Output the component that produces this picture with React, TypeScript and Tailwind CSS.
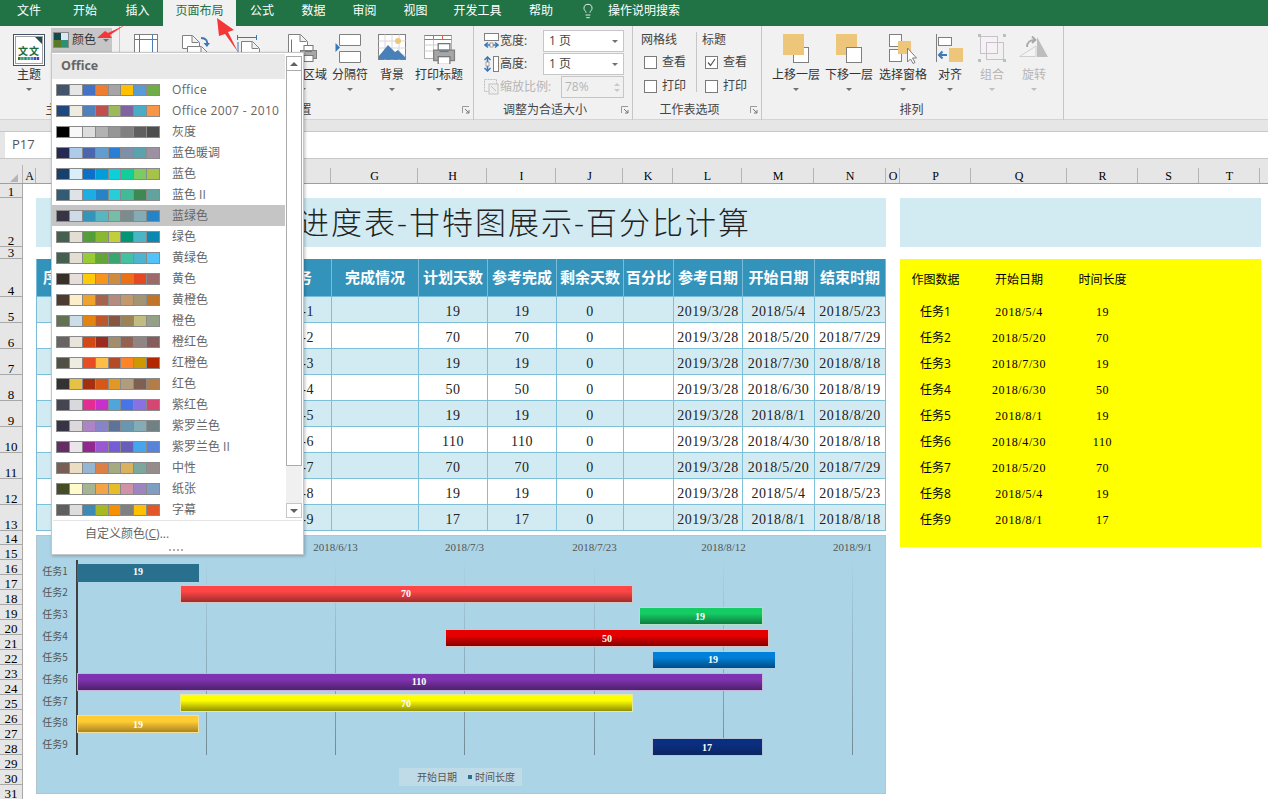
import React from 'react';
import { Lightbulb } from 'lucide-react';

const serif = "font-['Liberation_Serif','Noto_Sans_CJK_SC',serif]";

const tabs = [
  { label: '文件', w: 'w-[58px]' },
  { label: '开始', w: 'w-[54px]' },
  { label: '插入', w: 'w-[51px]' },
  { label: '页面布局', w: 'w-[73px]', active: true },
  { label: '公式', w: 'w-[52px]' },
  { label: '数据', w: 'w-[51px]' },
  { label: '审阅', w: 'w-[51px]' },
  { label: '视图', w: 'w-[51px]' },
  { label: '开发工具', w: 'w-[73px]' },
  { label: '帮助', w: 'w-[54px]' },
];

const palettes: [string, string[]][] = [
  ['Office', ['#44546a', '#e7e6e6', '#4472c4', '#ed7d31', '#a5a5a5', '#ffc000', '#5b9bd5', '#70ad47']],
  ['Office 2007 - 2010', ['#1f497d', '#eeece1', '#4f81bd', '#c0504d', '#9bbb59', '#8064a2', '#4bacc6', '#f79646']],
  ['灰度', ['#000000', '#f8f8f8', '#dddddd', '#b2b2b2', '#969696', '#808080', '#5f5f5f', '#4d4d4d']],
  ['蓝色暖调', ['#242852', '#acccea', '#4a66ac', '#629dd1', '#297fd5', '#7f8fa9', '#5aa2ae', '#9d90a0']],
  ['蓝色', ['#17406d', '#dbeff9', '#0f6fc6', '#009dd9', '#0bd0d9', '#10cf9b', '#7cca62', '#a5c249']],
  ['蓝色 II', ['#335b74', '#dfe3e5', '#1cade4', '#2683c6', '#27ced7', '#42ba97', '#3e8853', '#62a39f']],
  ['蓝绿色', ['#373545', '#cedbe6', '#3494ba', '#58b6c0', '#75bda7', '#7a8c8e', '#84acb6', '#2683c6']],
  ['绿色', ['#455f51', '#e3ded1', '#549e39', '#8ab833', '#c0cf3a', '#029676', '#4ab5c4', '#0989b1']],
  ['黄绿色', ['#455f51', '#e3ded1', '#99cb38', '#63a537', '#37a76f', '#44c1a3', '#4eb3cf', '#51c3f9']],
  ['黄色', ['#39302a', '#e5dedb', '#ffca08', '#f8931d', '#ce8d3e', '#ec7016', '#e64823', '#9c6a6a']],
  ['黄橙色', ['#4e3b30', '#fbeec9', '#f0a22e', '#a5644e', '#b58b80', '#c3986d', '#a19574', '#c17529']],
  ['橙色', ['#637052', '#ccddea', '#e48312', '#bd582c', '#865640', '#9b8357', '#c2bc80', '#94a088']],
  ['橙红色', ['#696464', '#e9e5dc', '#d34817', '#9b2d1f', '#a28e6a', '#956251', '#918485', '#855d5d']],
  ['红橙色', ['#505046', '#eeece0', '#e84c22', '#ffbd47', '#b64926', '#ff8427', '#cc9900', '#b22600']],
  ['红色', ['#323232', '#e5c243', '#a5300f', '#d55816', '#e19825', '#b19c7d', '#7f5f52', '#b27d49']],
  ['紫红色', ['#454551', '#d8d9dc', '#e32d91', '#c830cc', '#4ea6dc', '#4775e7', '#8971e1', '#d54773']],
  ['紫罗兰色', ['#373545', '#dcd8dc', '#ad84c6', '#8784c7', '#5d739a', '#6997af', '#84acb6', '#6f8183']],
  ['紫罗兰色 II', ['#632e62', '#eae5eb', '#92278f', '#9b57d3', '#755dd9', '#665eb8', '#45a5ed', '#5982db']],
  ['中性', ['#775f55', '#ebddc3', '#94b6d2', '#dd8047', '#a5ab81', '#d8b25c', '#7ba79d', '#968c8c']],
  ['纸张', ['#444d26', '#fefac9', '#a5b592', '#f3a447', '#e7bc29', '#d092a7', '#9c85c0', '#809ec2']],
  ['字幕', ['#5f5f5f', '#dddddd', '#3d8ab5', '#a8b820', '#f79000', '#808080', '#ffc000', '#e2572a']],
];

const colHeaders = [
  { label: 'A', w: 'w-[13px]' },
  { label: '', w: 'w-[295px]' },
  { label: 'G', w: 'w-[87px]' },
  { label: 'H', w: 'w-[69px]' },
  { label: 'I', w: 'w-[69px]' },
  { label: 'J', w: 'w-[67px]' },
  { label: 'K', w: 'w-[50px]' },
  { label: 'L', w: 'w-[69px]' },
  { label: 'M', w: 'w-[72px]' },
  { label: 'N', w: 'w-[72px]' },
  { label: 'O', w: 'w-[14px]' },
  { label: 'P', w: 'w-[71px]' },
  { label: 'Q', w: 'w-[96px]' },
  { label: 'R', w: 'w-[71px]' },
  { label: 'S', w: 'w-[61px]' },
  { label: 'T', w: 'w-[61px]' },
];

const rowHeaders = [
  ['1', 'h-[14px]'], ['2', 'h-[49px]'], ['3', 'h-[12px]'], ['4', 'h-[38px]'],
  ['5', 'h-[26px]'], ['6', 'h-[26px]'], ['7', 'h-[26px]'], ['8', 'h-[26px]'], ['9', 'h-[26px]'],
  ['10', 'h-[26px]'], ['11', 'h-[26px]'], ['12', 'h-[26px]'], ['13', 'h-[26px]'], ['14', 'h-[14px]'],
  ['15', 'h-[15px]'], ['16', 'h-[15px]'], ['17', 'h-[15px]'], ['18', 'h-[15px]'], ['19', 'h-[15px]'],
  ['20', 'h-[15px]'], ['21', 'h-[15px]'], ['22', 'h-[15px]'], ['23', 'h-[15px]'], ['24', 'h-[15px]'],
  ['25', 'h-[15px]'], ['26', 'h-[15px]'], ['27', 'h-[15px]'], ['28', 'h-[15px]'], ['29', 'h-[15px]'],
  ['30', 'h-[15px]'], ['31', 'h-[15px]'],
];

const tableHead = ['序号', '任务', '完成情况', '计划天数', '参考完成', '剩余天数', '百分比', '参考日期', '开始日期', '结束时期'];

const tasks = [
  { plan: 19, start: '2018/5/4', end: '2018/5/23' },
  { plan: 70, start: '2018/5/20', end: '2018/7/29' },
  { plan: 19, start: '2018/7/30', end: '2018/8/18' },
  { plan: 50, start: '2018/6/30', end: '2018/8/19' },
  { plan: 19, start: '2018/8/1', end: '2018/8/20' },
  { plan: 110, start: '2018/4/30', end: '2018/8/18' },
  { plan: 70, start: '2018/5/20', end: '2018/7/29' },
  { plan: 19, start: '2018/5/4', end: '2018/5/23' },
  { plan: 17, start: '2018/8/1', end: '2018/8/18' },
];

const bars = [
  { x: 77, w: 121, y: 564, top: '#296f8e', bottom: '#296f8e', line: '#296f8e', tx: 138, ty: 575 },
  { x: 180, w: 452, y: 585, top: '#ff4545', bottom: '#982c2c', line: '#d9c4c4', tx: 406, ty: 597 },
  { x: 639, w: 123, y: 607, top: '#14cc64', bottom: '#0d7a3e', line: '#b4e0c8', tx: 700, ty: 620 },
  { x: 445, w: 323, y: 629, top: '#e60000', bottom: '#800000', line: '#d9c4c4', tx: 607, ty: 642 },
  { x: 652, w: 123, y: 651, top: '#0080d8', bottom: '#004a80', line: '#b4d0e0', tx: 713, ty: 663 },
  { x: 77, w: 685, y: 673, top: '#7f33b0', bottom: '#4a2068', line: '#c8b4d8', tx: 419, ty: 685 },
  { x: 180, w: 452, y: 694, top: '#ffff00', bottom: '#8b8b00', line: '#e8e8a0', tx: 406, ty: 707 },
  { x: 77, w: 121, y: 715, top: '#ffcc33', bottom: '#a88020', line: '#f0e0a0', tx: 138, ty: 728 },
  { x: 652, w: 110, y: 738, top: '#0a2f80', bottom: '#0a2560', line: '#b4c4d8', tx: 707, ty: 751 },
];

const gridXs = [206, 335, 464, 594, 723, 852];
const axisDates = [['2018/6/13', 335], ['2018/7/3', 464], ['2018/7/23', 594], ['2018/8/12', 723], ['2018/9/1', 852]] as const;

const Caret = ({ dim }: { dim?: boolean }) => (
  <svg width="6" height="3" viewBox="0 0 6 3">
    <path d="M0 0h6L3 3z" fill={dim ? '#bdbdbd' : '#707070'} />
  </svg>
);

const Launcher = () => (
  <svg width="8" height="8" viewBox="0 0 8 8" className="shrink-0 mr-[3px]">
    <path d="M0.500 7V0.500H7" fill="none" stroke="#9a9a9a" />
    <path d="M3 3l4 4M7 4v3H4" fill="none" stroke="#777" />
  </svg>
);

const Printer = ({ x, y, scale = 1 }: { x: number; y: number; scale?: number }) => (
  <g transform={`translate(${x} ${y}) scale(${scale})`}>
    <rect x="4" y="0.500" width="9" height="5" fill="#fff" stroke="#777" />
    <rect x="0.500" y="5.500" width="16" height="8" fill="#a6a6a6" stroke="#808080" />
    <rect x="4" y="10.500" width="9" height="6" fill="#fff" stroke="#777" />
    <path d="M5 6.500h7" stroke="#4a7ebb" />
  </g>
);

const PageFold = ({ x, y, w = 20, h = 28 }: { x: number; y: number; w?: number; h?: number }) => (
  <path
    d={`M${x + 0.5} ${y + 0.5}h${w - 8}l7 7V${y + h - 0.5}H${x + 0.5}z M${x + w - 8} ${y + 1}v6.500h6.500`}
    fill="#fff"
    stroke="#808080"
  />
);

const ThemeIcon = () => (
  <svg width="32" height="32" viewBox="0 0 32 32">
    <rect x="0.500" y="0.500" width="31" height="31" fill="#fff" stroke="#44546a" />
    <rect x="2.500" y="2.500" width="27" height="27" fill="#fff" stroke="#a0a0a0" />
    <path d="M22 3h7v7z" fill="#1f4e4e" />
    <text x="5" y="21" fontSize="10" fill="#1e6b3c" fontWeight="700">文</text>
    <text x="16" y="21" fontSize="10" fill="#1e6b3c" fontWeight="700">文</text>
    {['#2e7d32', '#4c9f50', '#17907a', '#26a69a', '#3f8fd0', '#3f51b5', '#5e35b1'].map((c, i) => (
      <rect key={c} x={5 + i * 3.1} y="23" width="2.600" height="3" fill={c} />
    ))}
  </svg>
);

const ColorsIcon = () => (
  <svg width="16" height="16" viewBox="0 0 16 16" className="shrink-0">
    <rect width="16" height="16" fill="#8a8a8a" />
    <rect x="1" y="1" width="7" height="7" fill="#12494a" />
    <rect x="8" y="1" width="7" height="7" fill="#d6eaf5" />
    <rect x="1" y="8" width="7" height="7" fill="#5a7a2a" />
    <rect x="8" y="8" width="7" height="7" fill="#2e9070" />
  </svg>
);

const MarginsIcon = () => (
  <svg width="24" height="30" viewBox="0 0 24 30">
    <rect x="0.500" y="0.500" width="23" height="29" fill="#fff" stroke="#808080" />
    <path d="M0.500 5.500h23M0.500 24.500h23M5.500 0.500v29M18.500 0.500v29" stroke="#4a7ebb" fill="none" />
  </svg>
);

const OrientationIcon = () => (
  <svg width="30" height="30" viewBox="0 0 30 30">
    <PageFold x={1} y={1} w={18} h={14} />
    <PageFold x={6} y={12} w={22} h={18} />
    <path d="M20 4c5 0 7 3 6 7" fill="none" stroke="#3b78b8" strokeWidth="2" />
    <path d="M22.500 9l3.500 4 3-4z" fill="#3b78b8" />
  </svg>
);

const SizeIcon = () => (
  <svg width="24" height="30" viewBox="0 0 24 30">
    <path d="M0.500 1v5M19.500 1v5M1 3.500h18M1 8v20" stroke="#3b78b8" fill="none" />
    <PageFold x={4} y={7} w={19} h={23} />
  </svg>
);

const PrintAreaIcon = () => (
  <svg width="30" height="30" viewBox="0 0 30 30">
    <PageFold x={0} y={0} w={20} h={28} />
    <path d="M3.500 5.500v20h13" fill="none" stroke="#4a7ebb" />
    <Printer x={12} y={11} />
  </svg>
);

const BreaksIcon = () => (
  <svg width="31" height="30" viewBox="0 0 31 30">
    <path d="M4.500 0.500h21v11h-21zM4.500 17.500h21v11h-21z" fill="#fff" stroke="#808080" />
    <path d="M0.500 9L5 13.500 0.500 18z" fill="#3b78b8" />
  </svg>
);

const BackgroundIcon = () => (
  <svg width="28" height="28" viewBox="0 0 28 28">
    <rect x="0.500" y="0.500" width="27" height="25" fill="#fff" stroke="#808080" />
    <path d="M0.500 7h27M0.500 14h27M0.500 21h27M7 0.500v25M14 0.500v25M21 0.500v25" stroke="#d8d8d8" />
    <circle cx="20" cy="7" r="3" fill="#edc67a" />
    <path d="M1 22l9-11 7 7 3-2 7 7v2H1z" fill="#4a80b8" />
  </svg>
);

const PrintTitlesIcon = () => (
  <svg width="33" height="30" viewBox="0 0 33 30">
    <rect x="1.500" y="1.500" width="27" height="23" fill="#fff" stroke="#b0b0b0" />
    <path d="M1.500 5.500h27M1.500 1.500h27M10.500 1.500v4M19.500 1.500v4" stroke="#d9603c" fill="none" />
    <path d="M1.500 11h27M1.500 17h27M10.500 5.500v19" stroke="#cfcfcf" />
    <Printer x={10} y={9} scale={1.300} />
  </svg>
);

const BringForwardIcon = () => (
  <svg width="30" height="32" viewBox="0 0 30 32">
    <rect x="12.500" y="13.500" width="15" height="15" fill="#fff" stroke="#7f7f7f" />
    <rect x="2" y="0" width="21" height="21" fill="#edc67a" />
  </svg>
);

const SendBackwardIcon = () => (
  <svg width="30" height="32" viewBox="0 0 30 32">
    <rect x="2" y="0" width="21" height="21" fill="#edc67a" />
    <rect x="12.500" y="13.500" width="15" height="15" fill="#fff" stroke="#7f7f7f" />
  </svg>
);

const SelectionPaneIcon = () => (
  <svg width="30" height="32" viewBox="0 0 30 32">
    <rect x="1.500" y="0.500" width="12" height="12" fill="#fff" stroke="#7f7f7f" />
    <rect x="1.500" y="15.500" width="12" height="12" fill="#fff" stroke="#7f7f7f" />
    <rect x="10" y="7" width="13" height="13" fill="#edc67a" />
    <path d="M19.500 14v14l3-3 2.500 4.500 2-1-2.500-4.500h4z" fill="#fff" stroke="#7f7f7f" />
  </svg>
);

const AlignIcon = () => (
  <svg width="28" height="32" viewBox="0 0 28 32">
    <path d="M0.500 0v28" stroke="#7f7f7f" />
    <rect x="2.500" y="3.500" width="13" height="8" fill="#fff" stroke="#7f7f7f" />
    <rect x="13" y="14" width="14" height="14" fill="#edc67a" />
    <path d="M11 21H3.500M6.500 17.500L3 21l3.500 3.500" fill="none" stroke="#3b78b8" strokeWidth="2" />
  </svg>
);

const GroupIcon = () => (
  <svg width="28" height="30" viewBox="0 0 28 30">
    <rect x="2.500" y="2.500" width="17" height="17" fill="#f5f1f5" stroke="#c8c0cc" />
    <rect x="8.500" y="8.500" width="17" height="17" fill="none" stroke="#c8c0cc" />
    <rect x="0" y="0" width="3" height="3" fill="#bdbdbd" />
    <rect x="25" y="0" width="3" height="3" fill="#bdbdbd" />
    <rect x="0" y="25" width="3" height="3" fill="#bdbdbd" />
    <rect x="25" y="25" width="3" height="3" fill="#bdbdbd" />
  </svg>
);

const RotateIcon = () => (
  <svg width="30" height="30" viewBox="0 0 30 30">
    <path d="M0.500 22.500L17 12v10.500z" fill="#f3f3f3" stroke="#cfcfcf" />
    <path d="M18 3l11 20H18z" fill="#bdbdbd" />
    <path d="M8 13c0-5 3-7 8-7M13 2.500L16.500 6 13 9" fill="none" stroke="#a8a8a8" strokeWidth="1.800" />
  </svg>
);

const WidthIcon = () => (
  <svg width="15" height="16" viewBox="0 0 15 16">
    <rect x="0.500" y="0.500" width="14" height="7" fill="#fff" stroke="#808080" />
    <path d="M1 12h13M4 9.500L1 12l3 2.500M11 9.500l3 2.500-3 2.500" fill="none" stroke="#3b78b8" strokeWidth="1.500" />
    <rect x="6" y="10" width="3" height="4" fill="#fff" stroke="#808080" strokeWidth="0.700" />
  </svg>
);

const HeightIcon = () => (
  <svg width="15" height="16" viewBox="0 0 15 16">
    <rect x="9.500" y="0.500" width="5" height="15" fill="#fff" stroke="#808080" />
    <path d="M3.500 1v14M0.500 4l3-3 3 3M0.500 12l3 3 3-3" fill="none" stroke="#3b78b8" strokeWidth="1.500" />
    <rect x="2" y="6" width="3" height="4" fill="#fff" stroke="#808080" strokeWidth="0.700" />
  </svg>
);

const ScaleIcon = () => (
  <svg width="15" height="16" viewBox="0 0 15 16">
    <rect x="0.500" y="0.500" width="12" height="12" fill="none" stroke="#bdbdbd" strokeDasharray="2 1" />
    <rect x="5" y="5" width="9" height="10" fill="#eeeeee" stroke="#c4c4c4" />
    <path d="M7 7l5 5" stroke="#bdbdbd" />
  </svg>
);

const LargeItem = ({ w, icon, label, dim }: { w: string; icon: React.ReactNode; label: string; dim?: boolean }) => (
  <div className={`${w} flex flex-col items-center pt-[8px] shrink-0`}>
    <div className="h-[32px] flex items-start justify-center">{icon}</div>
    <div className={`h-[16px] mt-[1px] leading-[16px] whitespace-nowrap text-[12px] ${dim ? 'text-[#b5b5b5]' : 'text-[#333]'}`}>{label}</div>
    <div className="mt-[5px] flex">
      <Caret dim={dim} />
    </div>
  </div>
);

const Group = ({ w, label, launcher, labelPad, children }: { w: string; label: string; launcher?: boolean; labelPad?: string; children: React.ReactNode }) => (
  <div className={`${w} h-[94px] shrink-0 flex flex-col border-r border-[#c6c6c6]`}>
    <div className="h-[76px] flex">{children}</div>
    <div className="h-[16px] flex items-center">
      <div className={`flex-1 text-center text-[12px] leading-[16px] text-[#444] ${labelPad ?? ''}`}>{label}</div>
      {launcher && <Launcher />}
    </div>
  </div>
);

const PageCount = () => (
  <div className="w-[81px] h-[22px] bg-white border border-[#c6c6c6] flex items-center justify-between pl-[5px] pr-[5px] text-[12px] text-[#444]">
    <span>1 页</span>
    <Caret />
  </div>
);

const Check = ({ checked, label }: { checked?: boolean; label: string }) => (
  <div className="h-[24px] flex items-center gap-[5px] text-[12px] text-[#444] ml-[3px]">
    <div className="w-[13px] h-[13px] bg-white border border-[#7a7a7a] flex items-center justify-center">
      {checked && (
        <svg width="9" height="9" viewBox="0 0 9 9">
          <path d="M1 4.500l2.500 3L8 1" fill="none" stroke="#555" strokeWidth="1.200" />
        </svg>
      )}
    </div>
    <span>{label}</span>
  </div>
);

const Ribbon = () => (
  <div className="h-[94px] bg-[#f1f1f1] border-b border-[#d4d4d4] flex">
    <Group w="w-[120px]" label="主题" labelPad="pr-[4px]">
      <div className="pl-[7px]">
        <LargeItem w="w-[44px]" icon={<ThemeIcon />} label="主题" />
      </div>
      <div className="mt-[2px] w-[61px] h-[24px] bg-[#c6c6c6] flex items-center gap-[3px] pl-[2px] text-[12px] text-[#333]">
        <ColorsIcon />
        <span>颜色</span>
        <div className="ml-[4px] flex"><Caret /></div>
      </div>
    </Group>
    <Group w="w-[354px]" label="页面设置" launcher labelPad="pr-[7px]">
      <LargeItem w="w-[52px]" icon={<MarginsIcon />} label="页边距" />
      <LargeItem w="w-[48px]" icon={<OrientationIcon />} label="纸张方向" />
      <LargeItem w="w-[58px]" icon={<SizeIcon />} label="纸张大小" />
      <LargeItem w="w-[50px]" icon={<PrintAreaIcon />} label="打印区域" />
      <LargeItem w="w-[44px]" icon={<BreaksIcon />} label="分隔符" />
      <LargeItem w="w-[40px]" icon={<BackgroundIcon />} label="背景" />
      <LargeItem w="w-[54px]" icon={<PrintTitlesIcon />} label="打印标题" />
    </Group>
    <Group w="w-[159px]" label="调整为合适大小" launcher labelPad="pr-[5px]">
      <div className="pt-[4px] pl-[10px] flex flex-col gap-[1px] text-[12px] text-[#444]">
        <div className="flex items-center h-[22px]">
          <div className="w-[16px] flex"><WidthIcon /></div>
          <span className="w-[43px]">宽度:</span>
          <PageCount />
        </div>
        <div className="flex items-center h-[22px]">
          <div className="w-[16px] flex"><HeightIcon /></div>
          <span className="w-[43px]">高度:</span>
          <PageCount />
        </div>
        <div className="flex items-center h-[22px] text-[#b5b5b5]">
          <div className="w-[16px] flex"><ScaleIcon /></div>
          <span className="w-[61px]">缩放比例:</span>
          <div className="w-[63px] h-[22px] bg-[#f1f1f1] border border-[#c6c6c6] flex items-center justify-between px-[3px]">
            <span>78%</span>
            <div className="flex flex-col gap-[3px]">
              <svg width="6" height="3" viewBox="0 0 6 3"><path d="M0 3h6L3 0z" fill="#c8c8c8" /></svg>
              <svg width="6" height="3" viewBox="0 0 6 3"><path d="M0 0h6L3 3z" fill="#c8c8c8" /></svg>
            </div>
          </div>
        </div>
      </div>
    </Group>
    <Group w="w-[129px]" label="工作表选项" launcher labelPad="pr-[4px]">
      <div className="pl-[8px] flex pt-[6px]">
        <div className="w-[56px] h-[60px] border-r border-[#c6c6c6]">
          <div className="h-[16px] leading-[16px] text-[12px] text-[#444]">网格线</div>
          <div className="mt-[2px]"><Check label="查看" /></div>
          <Check label="打印" />
        </div>
        <div className="pl-[5px]">
          <div className="h-[16px] leading-[16px] text-[12px] text-[#444]">标题</div>
          <div className="mt-[2px]"><Check checked label="查看" /></div>
          <Check label="打印" />
        </div>
      </div>
    </Group>
    <Group w="w-[302px]" label="排列" labelPad="pr-[2px]">
      <div className="w-[8px]" />
      <LargeItem w="w-[52px]" icon={<BringForwardIcon />} label="上移一层" />
      <LargeItem w="w-[54px]" icon={<SendBackwardIcon />} label="下移一层" />
      <LargeItem w="w-[54px]" icon={<SelectionPaneIcon />} label="选择窗格" />
      <LargeItem w="w-[40px]" icon={<AlignIcon />} label="对齐" />
      <LargeItem w="w-[44px]" icon={<GroupIcon />} label="组合" dim />
      <LargeItem w="w-[40px]" icon={<RotateIcon />} label="旋转" dim />
    </Group>
  </div>
);

const ColorMenu = () => (
  <div className="absolute left-[51px] top-[52px] w-[253px] h-[503px] bg-white border border-[#c6c6c6] shadow-[1px_1px_3px_rgba(0,0,0,0.25)] pt-[1px] flex flex-col">
    <div className="flex h-[466px]">
      <div className="w-[233px]">
        <div className="h-[25px] bg-[#e9e9e9] pl-[9px] flex items-center text-[12.500px] font-bold text-[#666]">Office</div>
        {palettes.map(([name, colors]) => (
          <div key={name} className={`h-[21px] flex items-center pl-[4px] gap-[12px] ${name === '蓝绿色' ? 'bg-[#c5c5c5]' : ''}`}>
            <div className="w-[104px] h-[12px] bg-[#8a8a8a] p-[1px] flex gap-[1px]">
              {colors.map((c, i) => (
                <div key={i} className="flex-1" style={{ backgroundColor: c }} />
              ))}
            </div>
            <span className={`text-[12px] text-[#666] whitespace-nowrap ${name.startsWith('Office') ? 'tracking-[0.350px]' : ''}`}>{name}</span>
          </div>
        ))}
      </div>
      <div className="ml-[1px] w-[16px] pt-[2px] flex flex-col">
        <div className="h-[15px] border border-[#ababab] bg-white flex items-center justify-center">
          <svg width="8" height="4" viewBox="0 0 8 4"><path d="M0 4h8L4 0z" fill="#606060" /></svg>
        </div>
        <div className="h-[395px] border border-t-0 border-[#ababab] bg-white" />
        <div className="h-[37px] bg-[#f0f0f0]" />
        <div className="h-[15px] border border-[#c6c6c6] bg-white flex items-center justify-center">
          <svg width="8" height="4" viewBox="0 0 8 4"><path d="M0 0h8L4 4z" fill="#606060" /></svg>
        </div>
      </div>
    </div>
    <div className="h-px mx-[1px] bg-[#e5e5e5]" />
    <div className="h-[26px] pl-[33px] flex items-center text-[12px] text-[#666]">
      <span>自定义颜色(<span className="underline">C</span>)...</span>
    </div>
    <div className="flex justify-center gap-[2px] pr-[3px] pt-[2px]">
      {[0, 1, 2, 3].map(i => (
        <div key={i} className="w-[2px] h-[2px] bg-[#b0b0b0]" />
      ))}
    </div>
  </div>
);

const RedArrows = () => (
  <svg className="absolute left-[90px] top-[10px] pointer-events-none" width="160" height="50" viewBox="90 10 160 50">
    <path d="M97 38L105 31l3 2L125 25 110 35l2 3z" fill="#f53636" />
    <path d="M217 18l17 12-6 2 10 20-13-18-6 2z" fill="#f53636" />
  </svg>
);

const Chart = () => (
  <div className="mt-[4px] h-[259px] bg-[#abd4e6] border border-[#b6c4cc]">
    <svg width="848" height="257" viewBox="37 536 848 257" className="block font-['Noto_Sans_CJK_SC',sans-serif]">
      <defs>
        <linearGradient id="grid-line" x1="0" y1="0" x2="0" y2="1">
          <stop offset="0" stopColor="#abd4e6" />
          <stop offset="1" stopColor="#738b96" />
        </linearGradient>
        {bars.map((b, i) => (
          <linearGradient key={i} id={`bar-${i}`} x1="0" y1="0" x2="0" y2="1">
            <stop offset="0.350" stopColor={b.top} />
            <stop offset="1" stopColor={b.bottom} />
          </linearGradient>
        ))}
      </defs>
      {gridXs.map(x => (
        <rect key={x} x={x} y="560" width="1" height="195" fill="url(#grid-line)" />
      ))}
      <rect x="76" y="560" width="2" height="195" fill="#404040" />
      {axisDates.map(([d, x]) => (
        <text key={d} x={x + 0.5} y="551" textAnchor="middle" fontSize="11" fill="#555" className={serif}>{d}</text>
      ))}
      {bars.map((b, i) => (
        <g key={i}>
          <text x="55" y={574.5 + i * 21.7} textAnchor="middle" fontSize="10" fill="#555">任务{i + 1}</text>
          <rect x={b.x + 0.5} y={b.y + 0.5} width={b.w} height="17" fill={`url(#bar-${i})`} stroke={b.line} />
          <text x={b.tx} y={b.ty} textAnchor="middle" fontSize="10" fontWeight="700" fill="#fff" className={serif}>{tasks[i].plan}</text>
        </g>
      ))}
      <rect x="399" y="768" width="123" height="18" fill="#c0dbe8" />
      <text x="417" y="781" fontSize="10" fill="#555">开始日期</text>
      <rect x="468" y="775" width="4" height="4" fill="#296f8e" />
      <text x="475" y="781" fontSize="10" fill="#555">时间长度</text>
    </svg>
  </div>
);

const TaskTable = () => (
  <div className="border-l border-t border-[#79bcd8]">
    <div className="grid grid-cols-[60px_235px_87px_69px_69px_67px_50px_69px_72px_71px] h-[38px] -mt-px bg-[#3393bb] text-white text-[15px] font-bold">
      {tableHead.map((h, i) => (
        <div
          key={h}
          className={`flex items-center border-r border-b border-[#79bcd8] whitespace-nowrap overflow-hidden ${i === 1 ? 'justify-end pr-[19px]' : i === 0 ? 'pl-[6px]' : 'justify-center'}`}
        >
          {h}
        </div>
      ))}
    </div>
    {tasks.map((t, i) => {
      const cells = [String(i + 1), `任务-${i + 1}`, '', String(t.plan), String(t.plan), '0', '', '2019/3/28', t.start, t.end];
      return (
        <div key={i} className={`grid grid-cols-[60px_235px_87px_69px_69px_67px_50px_69px_72px_71px] h-[26px] text-[14px] tracking-[0.500px] text-[#222] ${serif} ${i % 2 === 0 ? 'bg-[#d2ebf3]' : 'bg-white'}`}>
          {cells.map((c, j) => (
            <div key={j} className={`flex items-center pt-[3px] border-r border-b border-[#7fc0d9] whitespace-nowrap ${j === 1 ? 'justify-end pr-[17px]' : 'justify-center'}`}>{c}</div>
          ))}
        </div>
      );
    })}
  </div>
);

const PlotData = () => (
  <div className="mt-[12px] h-[288px] pt-[2px] bg-[#ffff00] text-[12px] text-black">
    <div className="grid grid-cols-[71px_96px_71px] h-[38px] items-center text-center">
      <div>作图数据</div>
      <div>开始日期</div>
      <div>时间长度</div>
    </div>
    {tasks.map((t, i) => (
      <div key={i} className="grid grid-cols-[71px_96px_71px] h-[26px] items-center text-center">
        <div>任务{i + 1}</div>
        <div className={`${serif} tracking-[0.600px]`}>{t.start}</div>
        <div className={`${serif} tracking-[0.600px]`}>{t.plan}</div>
      </div>
    ))}
  </div>
);

const App = () => {
  return (
    <div className="relative w-full h-[799px] overflow-hidden bg-white font-['Open_Sans','Noto_Sans_CJK_SC',sans-serif]">
      {/* Tabs */}
      <div className="h-[26px] bg-[#217346] flex items-center text-[12px] text-white">
        {tabs.map(t => (
          <div key={t.label} className={`${t.w} h-[26px] pb-[5px] flex items-center justify-center ${t.active ? 'bg-[#f1f1f1] text-[#217346]' : ''}`}>{t.label}</div>
        ))}
        <Lightbulb className="w-[16px] h-[18px] ml-[12px] mb-[5px] text-white" strokeWidth={1.3} />
        <span className="ml-[12px] mb-[5px]">操作说明搜索</span>
      </div>

      <Ribbon />

      <div className="h-[11px] bg-[#e6e6e6]" />

      {/* Formula bar */}
      <div className="h-[28px] bg-[#e6e6e6] pl-[5px] border-t border-b border-[#c6c6c6]">
        <div className="h-full bg-white pl-[7px] flex items-center text-[13px] text-[#555]">P17</div>
      </div>

      {/* Column headers */}
      <div className={`h-[25px] bg-[#e6e6e6] flex items-end border-b border-[#9e9e9e] text-[12px] text-black ${serif}`}>
        <div className="w-[23px] h-[18px] shrink-0 flex justify-end items-end pr-[4px] pb-[1px] border-r border-[#b5b5b5]">
          <svg width="8" height="8" viewBox="0 0 8 8"><path d="M8 0v8H0z" fill="#b5b5b5" /></svg>
        </div>
        {colHeaders.map((c, i) => (
          <div key={i} className={`${c.w} h-[15px] shrink-0 pl-[1px] flex items-center justify-center border-r border-[#b5b5b5]`}>{c.label}</div>
        ))}
      </div>

      {/* Sheet */}
      <div className="flex">
        <div className={`w-[23px] shrink-0 bg-[#e6e6e6] text-[13px] text-black ${serif}`}>
          {rowHeaders.map(([n, h]) => (
            <div key={n} className={`${h} border-b border-r border-[#a8a8a8] flex items-end justify-center leading-[11px] overflow-hidden`}>{n}</div>
          ))}
        </div>
        <div className="pl-[13px] pt-[14px] flex gap-[14px]">
          <div className="w-[850px] shrink-0">
            <div className="h-[49px] bg-[#d2ebf3] flex items-center justify-end pr-[135px] text-[31px] tracking-[2px] font-light text-[#222] whitespace-nowrap">项目进度表-甘特图展示-百分比计算</div>
            <div className="mt-[12px]">
              <TaskTable />
            </div>
            <Chart />
          </div>
          <div className="w-[361px] shrink-0">
            <div className="h-[49px] bg-[#d2ebf3]" />
            <PlotData />
          </div>
        </div>
      </div>

      <ColorMenu />
      <RedArrows />
    </div>
  );
};

export default App;
